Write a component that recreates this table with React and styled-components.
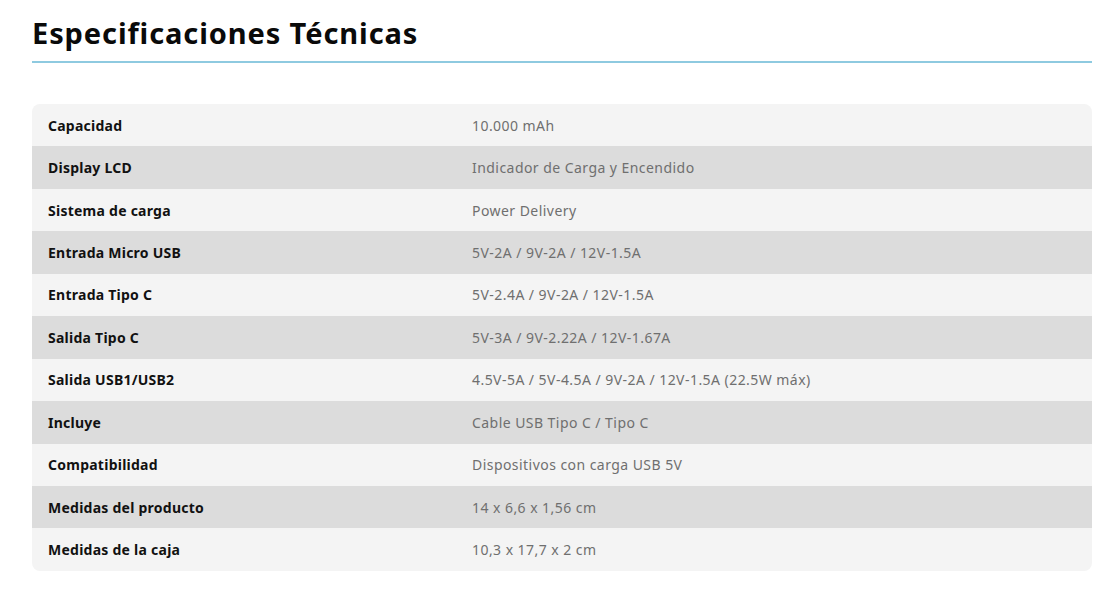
import React from "react";
import styled, { createGlobalStyle } from "styled-components";

const Global = createGlobalStyle`
  html, body { margin: 0; padding: 0; background: #fff; }
  body { font-family: "Noto Sans", "DejaVu Sans", sans-serif; }
`;

const Page = styled.div`
  padding: 13px 22px 0 32px;
`;

const Title = styled.h2`
  margin: 0;
  font-size: 29px;
  font-weight: 700;
  color: #0a0a0a;
  line-height: 40px;
  padding-bottom: 8px;
  border-bottom: 2px solid #8ecae0;
  letter-spacing: 0.9px;
`;

const Table = styled.div`
  margin-top: 41px;
  border-radius: 8px;
  overflow: hidden;
`;

const Row = styled.div`
  display: grid;
  grid-template-columns: 40% 60%;
  background: ${(p) => (p.$alt ? "#dcdcdc" : "#f4f4f4")};
  height: 42.45px;
  align-items: center;
`;

const Label = styled.div`
  padding: 0 16px;
  font-size: 14px;
  font-weight: 700;
  color: #111;
  letter-spacing: 0.25px;
`;

const Value = styled.div`
  padding: 0 16px;
  font-size: 14px;
  color: #6f6f6f;
  letter-spacing: 0.45px;
`;

const specs = [
  ["Capacidad", "10.000 mAh"],
  ["Display LCD", "Indicador de Carga y Encendido"],
  ["Sistema de carga", "Power Delivery"],
  ["Entrada Micro USB", "5V-2A / 9V-2A / 12V-1.5A"],
  ["Entrada Tipo C", "5V-2.4A / 9V-2A / 12V-1.5A"],
  ["Salida Tipo C", "5V-3A / 9V-2.22A / 12V-1.67A"],
  ["Salida USB1/USB2", "4.5V-5A / 5V-4.5A / 9V-2A / 12V-1.5A (22.5W máx)"],
  ["Incluye", "Cable USB Tipo C / Tipo C"],
  ["Compatibilidad", "Dispositivos con carga USB 5V"],
  ["Medidas del producto", "14 x 6,6 x 1,56 cm"],
  ["Medidas de la caja", "10,3 x 17,7 x 2 cm"],
];

export default function App() {
  return (
    <>
      <Global />
      <Page>
        <Title>Especificaciones Técnicas</Title>
        <Table>
          {specs.map(([k, v], i) => (
            <Row key={k} $alt={i % 2 === 1}>
              <Label>{k}</Label>
              <Value>{v}</Value>
            </Row>
          ))}
        </Table>
      </Page>
    </>
  );
}
